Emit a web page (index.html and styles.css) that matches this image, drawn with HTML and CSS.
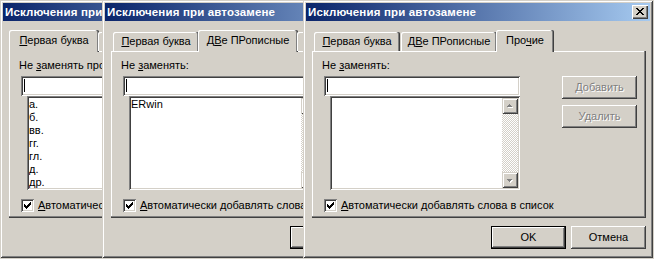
FILE: index.html
```html
<!DOCTYPE html>
<html lang="ru">
<head>
<meta charset="utf-8">
<title>Исключения при автозамене</title>
<link rel="stylesheet" href="styles.css">
</head>
<body>

<div class="win w1">
  <div class="titlebar">
    <span class="title">Исключения при автозамене</span>
    <span class="close"><svg width="8" height="7" viewBox="0 0 8 7" shape-rendering="crispEdges"><path d="M0 0h2v1H0zM6 0h2v1H6zM1 1h2v1H1zM5 1h2v1H5zM2 2h4v1H2zM3 3h2v1H3zM2 4h4v1H2zM1 5h2v1H1zM5 5h2v1H5zM0 6h2v1H0zM6 6h2v1H6z" fill="#000"/></svg></span>
  </div>
  <div class="body">
    <div class="tabs">
      <div class="tab t1 sel"><u>П</u>ервая буква</div>
      <div class="tab t2">Д<u>В</u>е ПРописные</div>
      <div class="tab t3">Про<u>ч</u>ие</div>
    </div>
    <div class="panel">
      <div class="col">
        <div class="lbl">Не <u>з</u>аменять прописной после:</div>
        <div class="edit"><span class="caret"></span></div>
        <div class="list">
          <div class="items">
            <div>а.</div><div>б.</div><div>вв.</div><div>гг.</div><div>гл.</div><div>д.</div><div>др.</div><div>е.</div>
          </div>
          <div class="sb">
            <div class="sbtn"><svg width="16" height="16" shape-rendering="crispEdges"><path d="M8 7h1v1H8zM7 8h3v1H7zM6 9h5v1H6z" fill="#fff"/><path d="M7 6h1v1H7zM6 7h3v1H6zM5 8h5v1H5z" fill="#808080"/></svg></div>
            <div class="track"></div>
            <div class="sbtn"><svg width="16" height="16" shape-rendering="crispEdges"><path d="M6 8h5v1H6zM7 9h3v1H7zM8 10h1v1H8z" fill="#fff"/><path d="M5 7h5v1H5zM6 8h3v1H6zM7 9h1v1H7z" fill="#808080"/></svg></div>
          </div>
        </div>
        <div class="chkrow">
          <span class="chk"><svg width="7" height="7" viewBox="0 0 7 7" shape-rendering="crispEdges"><path d="M6 0h1v1H6zM5 1h2v1H5zM0 2h1v1H0zM4 2h3v1H4zM0 3h2v1H0zM3 3h3v1H3zM0 4h5v1H0zM1 5h3v1H1zM2 6h1v1H2z" fill="#000"/></svg></span>
          <span><u>А</u>втоматически добавлять слова в список</span>
        </div>
      </div>
      <div class="side">
        <div class="btn dis">Добавить</div>
        <div class="btn dis">Удалить</div>
      </div>
    </div>
    <div class="btns">
      <div class="btn def">OK</div>
      <div class="btn">Отмена</div>
    </div>
  </div>
</div>

<div class="win w2">
  <div class="titlebar">
    <span class="title">Исключения при автозамене</span>
    <span class="close"><svg width="8" height="7" viewBox="0 0 8 7" shape-rendering="crispEdges"><path d="M0 0h2v1H0zM6 0h2v1H6zM1 1h2v1H1zM5 1h2v1H5zM2 2h4v1H2zM3 3h2v1H3zM2 4h4v1H2zM1 5h2v1H1zM5 5h2v1H5zM0 6h2v1H0zM6 6h2v1H6z" fill="#000"/></svg></span>
  </div>
  <div class="body">
    <div class="tabs">
      <div class="tab t1"><u>П</u>ервая буква</div>
      <div class="tab t2 sel">Д<u>В</u>е ПРописные</div>
      <div class="tab t3">Про<u>ч</u>ие</div>
    </div>
    <div class="panel">
      <div class="col">
        <div class="lbl">Не <u>з</u>аменять:</div>
        <div class="edit"><span class="caret"></span></div>
        <div class="list">
          <div class="items">
            <div>ERwin</div>
          </div>
          <div class="sb">
            <div class="sbtn"><svg width="16" height="16" shape-rendering="crispEdges"><path d="M8 7h1v1H8zM7 8h3v1H7zM6 9h5v1H6z" fill="#fff"/><path d="M7 6h1v1H7zM6 7h3v1H6zM5 8h5v1H5z" fill="#808080"/></svg></div>
            <div class="track"></div>
            <div class="sbtn"><svg width="16" height="16" shape-rendering="crispEdges"><path d="M6 8h5v1H6zM7 9h3v1H7zM8 10h1v1H8z" fill="#fff"/><path d="M5 7h5v1H5zM6 8h3v1H6zM7 9h1v1H7z" fill="#808080"/></svg></div>
          </div>
        </div>
        <div class="chkrow">
          <span class="chk"><svg width="7" height="7" viewBox="0 0 7 7" shape-rendering="crispEdges"><path d="M6 0h1v1H6zM5 1h2v1H5zM0 2h1v1H0zM4 2h3v1H4zM0 3h2v1H0zM3 3h3v1H3zM0 4h5v1H0zM1 5h3v1H1zM2 6h1v1H2z" fill="#000"/></svg></span>
          <span><u>А</u>втоматически добавлять слова в список</span>
        </div>
      </div>
      <div class="side">
        <div class="btn dis">Добавить</div>
        <div class="btn dis">Удалить</div>
      </div>
    </div>
    <div class="btns">
      <div class="btn def">OK</div>
      <div class="btn">Отмена</div>
    </div>
  </div>
</div>

<div class="win w3">
  <div class="titlebar">
    <span class="title">Исключения при автозамене</span>
    <span class="close"><svg width="8" height="7" viewBox="0 0 8 7" shape-rendering="crispEdges"><path d="M0 0h2v1H0zM6 0h2v1H6zM1 1h2v1H1zM5 1h2v1H5zM2 2h4v1H2zM3 3h2v1H3zM2 4h4v1H2zM1 5h2v1H1zM5 5h2v1H5zM0 6h2v1H0zM6 6h2v1H6z" fill="#000"/></svg></span>
  </div>
  <div class="body">
    <div class="tabs">
      <div class="tab t1"><u>П</u>ервая буква</div>
      <div class="tab t2">Д<u>В</u>е ПРописные</div>
      <div class="tab t3 sel">Про<u>ч</u>ие</div>
    </div>
    <div class="panel">
      <div class="col">
        <div class="lbl">Не <u>з</u>аменять:</div>
        <div class="edit"><span class="caret"></span></div>
        <div class="list">
          <div class="items"></div>
          <div class="sb">
            <div class="sbtn"><svg width="16" height="16" shape-rendering="crispEdges"><path d="M8 7h1v1H8zM7 8h3v1H7zM6 9h5v1H6z" fill="#fff"/><path d="M7 6h1v1H7zM6 7h3v1H6zM5 8h5v1H5z" fill="#808080"/></svg></div>
            <div class="track"></div>
            <div class="sbtn"><svg width="16" height="16" shape-rendering="crispEdges"><path d="M6 8h5v1H6zM7 9h3v1H7zM8 10h1v1H8z" fill="#fff"/><path d="M5 7h5v1H5zM6 8h3v1H6zM7 9h1v1H7z" fill="#808080"/></svg></div>
          </div>
        </div>
        <div class="chkrow">
          <span class="chk"><svg width="7" height="7" viewBox="0 0 7 7" shape-rendering="crispEdges"><path d="M6 0h1v1H6zM5 1h2v1H5zM0 2h1v1H0zM4 2h3v1H4zM0 3h2v1H0zM3 3h3v1H3zM0 4h5v1H0zM1 5h3v1H1zM2 6h1v1H2z" fill="#000"/></svg></span>
          <span><u>А</u>втоматически добавлять слова в список</span>
        </div>
      </div>
      <div class="side">
        <div class="btn dis">Добавить</div>
        <div class="btn dis">Удалить</div>
      </div>
    </div>
    <div class="btns">
      <div class="btn def">OK</div>
      <div class="btn">Отмена</div>
    </div>
  </div>
</div>

</body>
</html>
```

FILE: styles.css
```css
* { box-sizing: border-box; }
html, body { margin: 0; padding: 0; }
body {
  width: 654px;
  height: 259px;
  overflow: hidden;
  position: relative;
  background: #d4d0c8;
  font-family: "Liberation Sans", Arial, sans-serif;
  font-size: 11px;
  color: #000;
}
u { text-decoration: underline; text-underline-offset: 1px; }

.win {
  position: absolute;
  top: 0;
  width: 350px;
  height: 258px;
  padding: 3px;
  background: #d4d0c8;
  box-shadow: inset 1px 1px #d4d0c8, inset -1px -1px #404040, inset 2px 2px #fff, inset -2px -2px #808080;
  display: flex;
  flex-direction: column;
  isolation: isolate;
}
.w1 { left: 0; z-index: 1; }
.w2 { left: 102px; z-index: 2; }
.w3 { left: 303px; z-index: 3; }

.titlebar {
  flex: none;
  height: 18px;
  display: flex;
  align-items: flex-start;
  justify-content: space-between;
  padding: 0 2px;
  background: linear-gradient(to right, #0a246a, #a6caf0);
  color: #fff;
}
.title {
  margin-top: 3px;
  font-weight: bold;
  font-size: 11.5px;
  letter-spacing: 0.15px;
  line-height: 13px;
  white-space: nowrap;
}
.close {
  margin-top: 2px;
  width: 16px;
  height: 14px;
  padding: 3px 0 0 4px;
  background: #d4d0c8;
  box-shadow: inset 1px 1px #fff, inset -1px -1px #404040, inset -2px -2px #808080;
}
.close svg { display: block; }

.body {
  flex: 1;
  padding: 9px 0 0 6px;
  display: flex;
  flex-direction: column;
}

.tabs {
  position: relative;
  z-index: 1;
  height: 21px;
  display: flex;
  align-items: flex-end;
  padding-left: 2px;
}
.tab {
  height: 19px;
  margin-right: 1px;
  padding-top: 3px;
  line-height: 13px;
  text-align: center;
  white-space: nowrap;
  background: #d4d0c8;
  border-radius: 2px 2px 0 0;
  box-shadow: inset -1px 0 #404040, inset -2px 0 #808080, inset 1px 1px #fff;
}
.t1 { width: 86px; }
.t2 { width: 96px; }
.t3 { width: 54px; }
.tab.sel {
  height: 22px;
  margin: 0 -1px -1px -2px;
  padding-top: 4px;
}
.t1.sel { width: 90px; }
.t2.sel { width: 100px; }
.t3.sel { width: 58px; }

.panel {
  width: 334px;
  height: 167px;
  padding: 8px 0 0 12px;
  display: flex;
  box-shadow: inset -1px -1px #404040, inset -2px -2px #808080, inset 1px 1px #fff;
}
.col {
  width: 196px;
  display: flex;
  flex-direction: column;
}
.lbl {
  line-height: 13px;
  margin-left: -2px;
  white-space: nowrap;
}
.edit, .list, .chk {
  background: #fff;
  box-shadow: inset 1px 1px #808080, inset -1px -1px #fff, inset 2px 2px #404040, inset -2px -2px #d4d0c8;
}
.edit {
  margin-top: 4px;
  height: 20px;
  padding: 3px 0 0 3px;
}
.caret {
  display: block;
  width: 1px;
  height: 13px;
  background: #000;
}
.list {
  margin-left: 6px;
  height: 94px;
  padding: 2px;
  display: flex;
}
.items {
  flex: 1;
  line-height: 13px;
  overflow: hidden;
  white-space: nowrap;
}
.sb {
  width: 16px;
  display: flex;
  flex-direction: column;
}
.sbtn {
  flex: none;
  width: 16px;
  height: 16px;
  background: #d4d0c8;
  box-shadow: inset 1px 1px #d4d0c8, inset -1px -1px #404040, inset 2px 2px #fff, inset -2px -2px #808080;
}
.sbtn svg { display: block; }
.track {
  flex: 1;
  background: repeating-conic-gradient(#d4d0c8 0 25%, #fff 0 50%) 0 0 / 2px 2px;
}

.chkrow {
  margin-top: 9px;
  height: 13px;
  display: flex;
  align-items: center;
  gap: 4px;
  white-space: nowrap;
  line-height: 13px;
}
.chk {
  flex: none;
  width: 13px;
  height: 13px;
  padding: 3px;
}
.chk svg { display: block; }

.side {
  margin-left: 42px;
  margin-top: 17px;
  display: flex;
  flex-direction: column;
  gap: 6px;
}

.btns {
  width: 334px;
  margin-top: 8px;
  display: flex;
  justify-content: flex-end;
  gap: 5px;
}
.btn {
  width: 75px;
  height: 23px;
  display: flex;
  align-items: center;
  justify-content: center;
  line-height: 13px;
  background: #d4d0c8;
  box-shadow: inset -1px -1px #404040, inset 1px 1px #fff, inset -2px -2px #808080;
}
.btn.def { border: 1px solid #000; }
.btn.dis { color: #808080; text-shadow: 1px 1px #fff; }
```
